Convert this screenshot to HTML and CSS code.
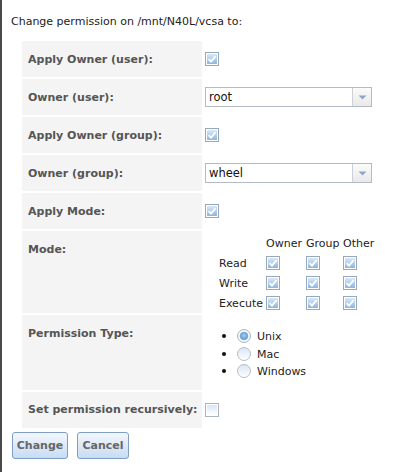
FILE: index.html
```html
<!DOCTYPE html>
<html>
<head>
<meta charset="utf-8">
<link rel="stylesheet" href="styles.css">
</head>
<body>
<svg class="defs" width="0" height="0">
  <defs>
    <linearGradient id="cbOn" x1="0" y1="0" x2="0" y2="1">
      <stop offset="0" stop-color="#d9e8f7"/>
      <stop offset="1" stop-color="#8db6df"/>
    </linearGradient>
    <linearGradient id="cbOff" x1="0" y1="0" x2="0" y2="1">
      <stop offset="0" stop-color="#d8e6f4"/>
      <stop offset="1" stop-color="#ffffff"/>
    </linearGradient>
    <radialGradient id="rdOn" cx="0.5" cy="0.45" r="0.5">
      <stop offset="0" stop-color="#a8cff0"/>
      <stop offset="1" stop-color="#5e9dd4"/>
    </radialGradient>
  </defs>
</svg>
<div class="page">
  <p class="title">Change permission on /mnt/N40L/vcsa to:</p>
  <div class="form">
    <div class="label">Apply Owner (user):</div>
    <div class="value center">
      <svg class="cb" viewBox="0 0 14 14"><rect x="0.5" y="0.5" width="13" height="13" fill="#fff" stroke="#97a8bd"/><rect x="2" y="2" width="10" height="10" fill="url(#cbOn)"/><path d="M3.6 7.2 L6 9.6 L10.6 4.2" stroke="#fff" stroke-width="1.8" fill="none"/></svg>
    </div>

    <div class="label">Owner (user):</div>
    <div class="value center">
      <div class="select"><span class="sel-text">root</span><span class="sel-btn"><svg width="9" height="5" viewBox="0 0 9 5"><path d="M0.5 0.5 H8.5 L4.5 4.5 Z" fill="#8ea6c4"/></svg></span></div>
    </div>

    <div class="label">Apply Owner (group):</div>
    <div class="value center">
      <svg class="cb" viewBox="0 0 14 14"><rect x="0.5" y="0.5" width="13" height="13" fill="#fff" stroke="#97a8bd"/><rect x="2" y="2" width="10" height="10" fill="url(#cbOn)"/><path d="M3.6 7.2 L6 9.6 L10.6 4.2" stroke="#fff" stroke-width="1.8" fill="none"/></svg>
    </div>

    <div class="label">Owner (group):</div>
    <div class="value center">
      <div class="select"><span class="sel-text">wheel</span><span class="sel-btn"><svg width="9" height="5" viewBox="0 0 9 5"><path d="M0.5 0.5 H8.5 L4.5 4.5 Z" fill="#8ea6c4"/></svg></span></div>
    </div>

    <div class="label">Apply Mode:</div>
    <div class="value center">
      <svg class="cb" viewBox="0 0 14 14"><rect x="0.5" y="0.5" width="13" height="13" fill="#fff" stroke="#97a8bd"/><rect x="2" y="2" width="10" height="10" fill="url(#cbOn)"/><path d="M3.6 7.2 L6 9.6 L10.6 4.2" stroke="#fff" stroke-width="1.8" fill="none"/></svg>
    </div>

    <div class="label top">Mode:</div>
    <div class="value mode">
      <div class="mode-grid">
        <span></span><span class="hd">Owner</span><span class="hd">Group</span><span class="hd">Other</span>
        <span class="rl">Read</span>
        <span><svg class="cb" viewBox="0 0 14 14"><rect x="0.5" y="0.5" width="13" height="13" fill="#fff" stroke="#97a8bd"/><rect x="2" y="2" width="10" height="10" fill="url(#cbOn)"/><path d="M3.6 7.2 L6 9.6 L10.6 4.2" stroke="#fff" stroke-width="1.8" fill="none"/></svg></span>
        <span><svg class="cb" viewBox="0 0 14 14"><rect x="0.5" y="0.5" width="13" height="13" fill="#fff" stroke="#97a8bd"/><rect x="2" y="2" width="10" height="10" fill="url(#cbOn)"/><path d="M3.6 7.2 L6 9.6 L10.6 4.2" stroke="#fff" stroke-width="1.8" fill="none"/></svg></span>
        <span><svg class="cb" viewBox="0 0 14 14"><rect x="0.5" y="0.5" width="13" height="13" fill="#fff" stroke="#97a8bd"/><rect x="2" y="2" width="10" height="10" fill="url(#cbOn)"/><path d="M3.6 7.2 L6 9.6 L10.6 4.2" stroke="#fff" stroke-width="1.8" fill="none"/></svg></span>
        <span class="rl">Write</span>
        <span><svg class="cb" viewBox="0 0 14 14"><rect x="0.5" y="0.5" width="13" height="13" fill="#fff" stroke="#97a8bd"/><rect x="2" y="2" width="10" height="10" fill="url(#cbOn)"/><path d="M3.6 7.2 L6 9.6 L10.6 4.2" stroke="#fff" stroke-width="1.8" fill="none"/></svg></span>
        <span><svg class="cb" viewBox="0 0 14 14"><rect x="0.5" y="0.5" width="13" height="13" fill="#fff" stroke="#97a8bd"/><rect x="2" y="2" width="10" height="10" fill="url(#cbOn)"/><path d="M3.6 7.2 L6 9.6 L10.6 4.2" stroke="#fff" stroke-width="1.8" fill="none"/></svg></span>
        <span><svg class="cb" viewBox="0 0 14 14"><rect x="0.5" y="0.5" width="13" height="13" fill="#fff" stroke="#97a8bd"/><rect x="2" y="2" width="10" height="10" fill="url(#cbOn)"/><path d="M3.6 7.2 L6 9.6 L10.6 4.2" stroke="#fff" stroke-width="1.8" fill="none"/></svg></span>
        <span class="rl">Execute</span>
        <span><svg class="cb" viewBox="0 0 14 14"><rect x="0.5" y="0.5" width="13" height="13" fill="#fff" stroke="#97a8bd"/><rect x="2" y="2" width="10" height="10" fill="url(#cbOn)"/><path d="M3.6 7.2 L6 9.6 L10.6 4.2" stroke="#fff" stroke-width="1.8" fill="none"/></svg></span>
        <span><svg class="cb" viewBox="0 0 14 14"><rect x="0.5" y="0.5" width="13" height="13" fill="#fff" stroke="#97a8bd"/><rect x="2" y="2" width="10" height="10" fill="url(#cbOn)"/><path d="M3.6 7.2 L6 9.6 L10.6 4.2" stroke="#fff" stroke-width="1.8" fill="none"/></svg></span>
        <span><svg class="cb" viewBox="0 0 14 14"><rect x="0.5" y="0.5" width="13" height="13" fill="#fff" stroke="#97a8bd"/><rect x="2" y="2" width="10" height="10" fill="url(#cbOn)"/><path d="M3.6 7.2 L6 9.6 L10.6 4.2" stroke="#fff" stroke-width="1.8" fill="none"/></svg></span>
      </div>
    </div>

    <div class="label top">Permission Type:</div>
    <div class="value">
      <ul class="radios">
        <li><svg class="rd" viewBox="0 0 14 14"><circle cx="7" cy="7" r="6.5" fill="#f4f8fc" stroke="#aab4c0"/><circle cx="7" cy="7" r="3.8" fill="url(#rdOn)" stroke="#6fa3d3" stroke-width="0.8"/></svg><span>Unix</span></li>
        <li><svg class="rd" viewBox="0 0 14 14"><circle cx="7" cy="7" r="6.5" fill="url(#cbOff)" stroke="#b4bdc8"/></svg><span>Mac</span></li>
        <li><svg class="rd" viewBox="0 0 14 14"><circle cx="7" cy="7" r="6.5" fill="url(#cbOff)" stroke="#b4bdc8"/></svg><span>Windows</span></li>
      </ul>
    </div>

    <div class="label">Set permission recursively:</div>
    <div class="value center">
      <svg class="cb" viewBox="0 0 14 14"><rect x="0.5" y="0.5" width="13" height="13" fill="#fff" stroke="#aab3be"/><rect x="2" y="2" width="10" height="10" fill="url(#cbOff)"/></svg>
    </div>
  </div>
  <div class="buttons">
    <button class="btn btn-change">Change</button>
    <button class="btn btn-cancel">Cancel</button>
  </div>
</div>
</body>
</html>
```
FILE: styles.css
```css
html, body {
  margin: 0;
  padding: 0;
  background: #ffffff;
}
body {
  width: 402px;
  height: 472px;
  box-sizing: border-box;
  border-left: 2px solid #4a4a4a;
  font-family: "DejaVu Sans", Verdana, sans-serif;
  font-size: 11px;
  color: #222;
  overflow: hidden;
}
.defs {
  position: absolute;
  width: 0;
  height: 0;
}
.page {
  padding-top: 15px;
}
.title {
  margin: 0 0 12px 9px;
  line-height: 14px;
  color: #222;
}
.form {
  margin-left: 20px;
  display: grid;
  grid-template-columns: 180px 1fr;
  column-gap: 3px;
  row-gap: 2px;
  grid-auto-rows: minmax(36px, auto);
}
.label {
  background: #f4f4f4;
  font-weight: bold;
  color: #555;
  padding: 0 6px;
  display: flex;
  align-items: center;
  white-space: nowrap;
}
.label.top {
  align-items: flex-start;
  padding-top: 12px;
}
.value {
  display: flex;
}
.value.center {
  align-items: center;
}
.cb {
  width: 14px;
  height: 14px;
  display: block;
}
.select {
  width: 167px;
  height: 20px;
  box-sizing: border-box;
  border: 1px solid #b3bbc6;
  display: flex;
  background: #fff;
}
.sel-text {
  flex: 1;
  padding-left: 3px;
  line-height: 18px;
  font-size: 11.5px;
  color: #111;
}
.sel-btn {
  width: 18px;
  border-left: 1px solid #ccd1d8;
  background: linear-gradient(#fbfbfb, #e9e9e9);
  display: flex;
  align-items: center;
  justify-content: center;
}
.value.mode {
  padding-top: 2px;
  padding-left: 14px;
}
.mode-grid {
  display: grid;
  grid-template-columns: 47px 40px 37px auto;
  grid-auto-rows: 20px;
  align-items: center;
  color: #222;
}
.radios {
  margin: 12px 0 10px 0;
  padding-left: 32px;
  list-style: disc;
  color: #222;
}
.radios li {
  height: 17.5px;
  line-height: 17.5px;
  font-size: 11px;
}
.radios li::marker {
  font-size: 14px;
  color: #111;
}
.radios li .rd {
  width: 14px;
  height: 14px;
  vertical-align: -3px;
  margin-right: 6px;
}
.buttons {
  margin: 4px 0 0 10px;
  display: flex;
  gap: 9px;
}
.btn {
  height: 27px;
  box-sizing: border-box;
  border: 1px solid #7e9fc3;
  border-radius: 3px;
  background: linear-gradient(#f3f7fc, #c7dcf3);
  font-family: "DejaVu Sans", Verdana, sans-serif;
  font-size: 11px;
  font-weight: bold;
  color: #666;
  padding: 0;
}
.btn-change {
  width: 56px;
}
.btn-cancel {
  width: 52px;
}
```
